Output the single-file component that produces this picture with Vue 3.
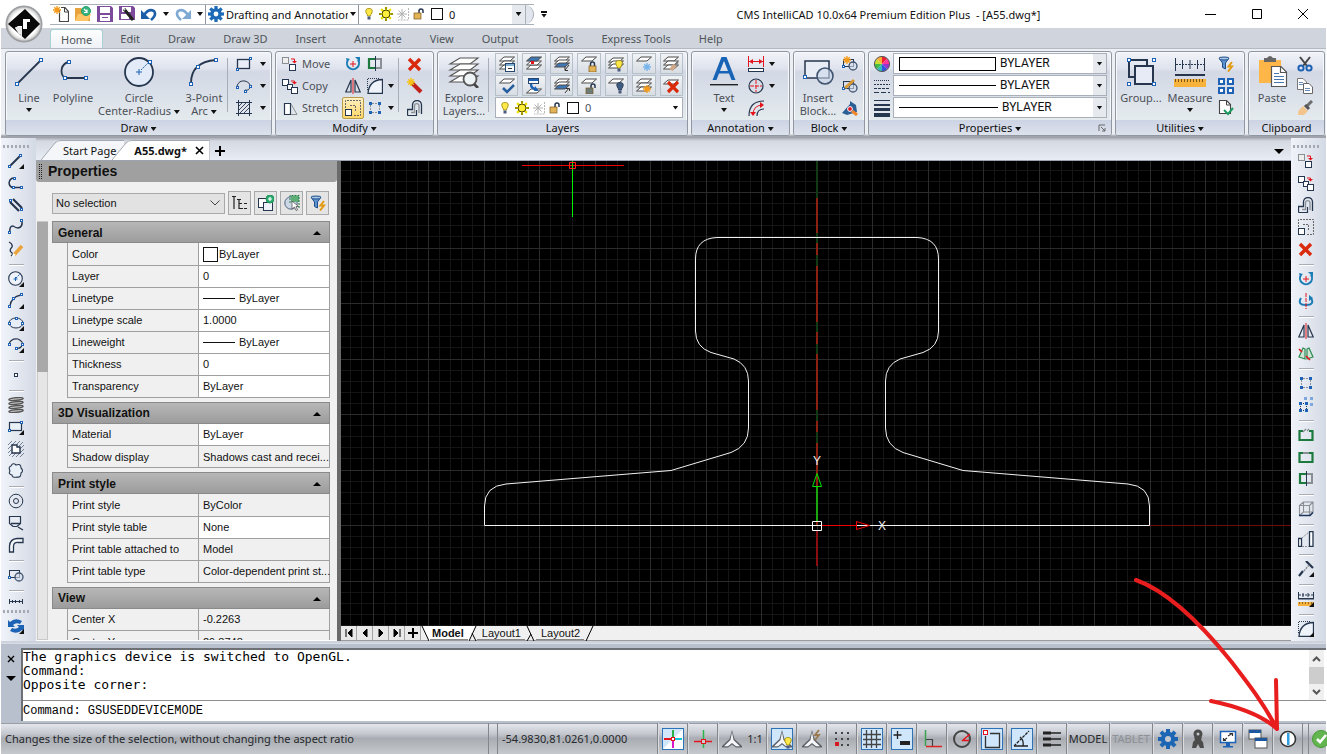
<script setup>
import { h, ref } from 'vue'

const N = '#26364e'
const B = '#1d62b5'
const R = '#e5141c'
const G = '#8a8f96'
const p = (d, s = N, w = 1, f = 'none') => `<path d="${d}" stroke="${s}" stroke-width="${w}" fill="${f}"/>`
const fill = (d, f) => `<path d="${d}" fill="${f}"/>`
const sq = (x, y, s = 3, c = B, f = '#fff') => `<rect x="${x + 0.5}" y="${y + 0.5}" width="${s}" height="${s}" fill="${f}" stroke="${c}"/>`
const box = (x, y, w, hh, f) => `<rect x="${x}" y="${y}" width="${w}" height="${hh}" fill="${f}"/>`
const circ = (x, y, r, s = N, w = 1, f = 'none') => `<circle cx="${x}" cy="${y}" r="${r}" stroke="${s}" stroke-width="${w}" fill="${f}"/>`
const dash = (d, s = N, w = 1, a = '2 1') => `<path d="${d}" stroke="${s}" stroke-width="${w}" fill="none" stroke-dasharray="${a}"/>`
const star = (x, y, r, c, w = 1.4) => {
  const k = Math.round(r * 7) / 10
  return p(`M${x - r} ${y}H${x + r}M${x} ${y - r}V${y + r}M${x - k} ${y - k}L${x + k} ${y + k}M${x + k} ${y - k}L${x - k} ${y + k}`, c, w)
}
const sheet = (y, f = '#fff', s = '#4a4a4a') => p(`M5 ${y}H15.5L11 ${y + 4}H.5Z`, s, 1, f)
const bulb = (x, y, c = '#ffe94a', s = '#9a8400') =>
  p(`M${x + 2.5} ${y + 8}Q${x + 2.5} ${y + 6.5} ${x + 1.2} ${y + 5}Q${x - 0.5} ${y + 0.5} ${x + 4} ${y + 0.5}Q${x + 8.5} ${y + 0.5} ${x + 6.8} ${y + 5}Q${x + 5.5} ${y + 6.5} ${x + 5.5} ${y + 8}Z`, s, 0.8, c) + box(x + 2.5, y + 8.5, 3, 3, '#4b5a80')
const lock = (x, y, open) =>
  p(open ? `M${x + 5} ${y + 5}V${y + 3}Q${x + 5} ${y + 1} ${x + 7} ${y + 1}Q${x + 9} ${y + 1} ${x + 9} ${y + 3}V${y + 5}` : `M${x + 1.5} ${y + 5}V${y + 3}Q${x + 1.5} ${y + 1} ${x + 3.5} ${y + 1}Q${x + 5.5} ${y + 1} ${x + 5.5} ${y + 3}V${y + 5}`, N, 1.5) +
  `<rect x="${x}" y="${y + 5}" width="7" height="6" fill="${open === 2 ? '#6f7d78' : '#e3b457'}" stroke="#7a5a20" stroke-width=".7"/>`
const tri = fill('M16 11V16H11Z', '#111')
const cross = (x, y, s, w) => p(`M${x} ${y}L${x + s} ${y + s}M${x + s} ${y}L${x} ${y + s}`, '#d92a0c', w)
const gear = (x, y, r, c, hole) => {
  let o = ''
  for (let i = 0; i < 8; i++) o += `<rect x="${x - r * 0.2}" y="${y - r}" width="${r * 0.4}" height="${r}" fill="${c}" transform="rotate(${i * 45} ${x} ${y})"/>`
  return o + `<circle cx="${x}" cy="${y}" r="${r * 0.72}" fill="${c}"/><circle cx="${x}" cy="${y}" r="${r * 0.3}" fill="${hole}"/>`
}
const compass = fill('M10 1L12.5 10L20 17V18.5H14L10 15.5L6 18.5H0V17L7.5 10Z', '#5d6167') + fill('M10 3L11.5 11L18 17.3H14L10 14L6 17.3H2L8.5 11Z', '#f4f6f8')
const funnel = p('M1 2H11L7.5 7V13L4.5 11.5V7Z', '#1f4f8c', 1, '#5c93cf') + `<ellipse cx="6" cy="2.5" rx="5" ry="1.5" fill="#a9c8e8" stroke="#1f4f8c"/>` + p('M14 6L10.5 10.5H14L10 15.5', '#e39a10', 2)
const arc3 = p('M2 13Q3 4 13 2', N, 1.3) + sq(0, 12, 2) + sq(4, 4, 2) + sq(12, 0, 2)
const U = p('M3 4A6 6 0 1 0 13 4', '#1c7cb5', 2) + fill('M10 1H15V6Z', '#1c7cb5') + fill('M1 2L5 3L2 6Z', '#1c7cb5')
const moveI = sq(0, 1, 6, G, '#eee') + sq(7, 8, 6, N) + p('M9 3H12.5V6', R) + fill('M10 5H15L12.5 7.5Z', R)
const copyI = sq(0, 1, 6, N) + sq(5, 6, 5, N) + sq(9, 9, 6, N) + p('M9 3H12.5V5', R) + fill('M10 4H15L12.5 6.5Z', R)
const offsetI = p('M.5 15.5V9.5H5.5V5A4.5 4.5 0 0 1 14.5 5V14', N, 1.3) + p('M.5 15.5H9.5V10', N, 1.2) + p('M4 12.5H7.5V5.5A2.3 2.3 0 0 1 12 5.5V13', G, 1.3)
const scaleI = dash('M.5 8V.5H15.5V15.5H8', '#666') + dash('M5 5.5H10.5V11', '#666') + sq(0, 9, 6, N)
const trimI = p('M8 3H2V12H8', '#1d7a3f', 2.2) + p('M8 3H14V12H8', G, 2) + p('M8.5 0V15', N, 1)
const mirrorI = p('M6 2V14H.8Z', N, 1.2) + p('M10 2V14H15.2Z', N, 1.2) + p('M8 0V16', R, 1)
const filletI = dash('M.5 12V.5H12', N, 1, '1 1') + p('M1 15.5Q2 2 15.5 1.5V15.5Z', N, 1.3, '#eef3fa')
const arrI = dash('M5 3.5H12M5 12.5H12M3.5 5V12M12.5 5V12', G, 1, '2 1') + box(2, 2, 3, 3, B) + box(11, 2, 3, 3, B) + box(2, 11, 3, 3, B) + box(11, 11, 3, 3, B)
const hatchI = p('M3 6L6 3M3 10L10 3M4 13L13 4M8 13L13 8', N, 0.9) + p('M2.5 0V16M13.5 0V16M0 2.5H16M0 13.5H16', N, 1)
const blockI = `<rect x="1.5" y="3.5" width="10" height="7" fill="none" stroke="${N}"/>` + circ(11, 10, 4, '#40536f', 1.3, '#d4deec99') + sq(0, 9, 2)
const measI = p('M.5 1V7M15.5 1V7M5 2V6M10 2V6', N) + dash('M1 4H15', N) + box(0, 7, 16, 1.5, N) + box(0, 11, 16, 4, '#f5b13d') + dash('M1 12H15', '#7a5412', 1.5, '1 2')

const icons = {
  app: [42, 42, `<defs><radialGradient id="ring"><stop offset=".72" stop-color="#fff"/><stop offset=".88" stop-color="#d8d8d8"/><stop offset="1" stop-color="#7f7f7f"/></radialGradient></defs><circle cx="21" cy="21" r="18" fill="url(#ring)" stroke="#9da1a6"/>` + fill('M22 6L37 21L22 36L5 21Z', '#0a0a0a') + fill('M12 25L15 23H19V31L16 31Z', '#fff') + fill('M20 16H27V19H24V26H20Z', '#fff') + fill('M12 24H19V34Z', '#e9e9e9')],
  New: [16, 16, p('M6.5 4V15.5H15.5V5.5L12 1.5H8', '#444', 1.2, '#fff') + p('M11.5 2V6H15.5', '#444') + star(4, 4, 4, '#f59b1b')],
  Open: [16, 16, fill('M0 2H6L8 4H15V15H0Z', '#e8a33c') + fill('M3 8H16L13 15H0Z', '#ffc566') + circ(11, 5, 4.5, '#25a06c', 1, '#37b37e') + p('M9 3L12 6M12 3.5V6.5H9', '#fff', 1.2)],
  Save: [16, 16, fill('M0 0H14L16 2V16H0Z', '#7d4b9b') + box(3, 1, 10, 6, '#fff') + box(3, 9, 10, 6, '#fff') + p('M5 11.5H11', '#7d4b9b', 1)],
  SaveAs: [16, 16, fill('M0 0H14L16 2V14H0Z', '#7d4b9b') + box(3, 1, 9, 5, '#fff') + box(2, 8, 8, 5, '#fff') + p('M5 3L14 14', '#222', 3) + p('M5 3L6 4', '#ddd', 2)],
  Undo: [16, 16, p('M3 9Q8 2 13 5Q16 9 10 14', '#1c5fa8', 2.6) + fill('M0 4V13H9Z', '#1c5fa8')],
  Redo: [16, 16, p('M13 9Q8 2 3 5Q0 9 6 14', '#7ea9d4', 2.6) + fill('M16 4V13H7Z', '#7ea9d4')],
  Gear: [16, 16, gear(8, 8, 8, '#1d6bb8', '#fff')],
  bulb: [14, 14, bulb(3, 1)],
  sun: [14, 14, star(7, 7, 7, '#ece000', 2.2) + circ(7, 7, 4, '#4c4500', 1, '#ffef3a') + p('M7 0V2M7 12V14M0 7H2M12 7H14', '#4c4500', 1)],
  frost: [14, 14, star(6, 7, 5, '#b0b0b0', 1) + dash('M12.5 1V13H2', '#b5b5b5')],
  lock: [14, 14, lock(1, 1, 1)],
  swatch: [14, 14, sq(1, 1, 11, '#111')],

  Line: [32, 32, p('M4 28L28 4', N, 1.8) + sq(2, 26) + sq(26, 2)],
  Polyline: [32, 32, p('M12 6A9 9 0 0 0 8 22H29', N, 1.8) + sq(10, 4) + sq(6, 20) + sq(27, 20)],
  Circle: [32, 32, circ(16, 16, 14, N, 1.8, '#e4ebf8') + p('M16 13V19M13 16H19', B) + dash('M18 14L26 6', B) + sq(25, 4)],
  Arc: [32, 32, p('M3 27Q3 6 28 4', N, 1.8) + sq(1, 26) + sq(8, 9) + sq(26, 2)],
  Rectangle: [16, 16, `<rect x="1.5" y="3.5" width="12" height="9" fill="#e8edf7" stroke="${N}" stroke-width="1.3"/>` + sq(0, 12, 2) + sq(13, 1, 2)],
  Ellipse: [16, 16, p('M1 8Q3 2 9 3Q15 5 14 9Q13 13 9 12', N, 1) + sq(0, 8, 2) + sq(13, 7, 2) + sq(8, 12, 2)],
  Hatch: [16, 16, hatchI],
  Move: [16, 16, moveI], Copy: [16, 16, copyI],
  Stretch: [16, 16, p('M2.5 3.5H8.5V14.5H2.5Z', N, 1.2, '#fff') + p('M9 4L15 14.5H9', G, 1)],
  Rotate: [16, 16, U + p('M8 5V11M5 8H11', R)],
  Trim: [16, 16, trimI], Mirror: [16, 16, mirrorI], Fillet: [16, 16, filletI], Scale: [16, 16, scaleI], Array: [16, 16, arrI],
  Erase: [16, 16, cross(2, 3, 11, 3.4)],
  Explode: [16, 16, p('M5 5L14 14', '#c2221c', 4) + p('M4 4L7 7', '#7a1a30', 2) + star(4, 4, 4, '#f6c21a', 1.6)],
  Offset: [16, 16, offsetI],
  Layers: [32, 32, [2, 8, 14, 20].map((y) => p(`M12 ${y}H30L22 ${y + 6}H2Z`, '#555', 1.1, '#fff')).join('') + circ(22, 23, 6.5, '#555', 1.8, '#eef3f6') + p('M26 28L30 32', '#444', 2.6)],
  L1: [16, 16, sheet(1) + sheet(5) + sheet(9) + `<rect x="6.5" y="7.5" width="9" height="8" fill="#fff" stroke="#26466e"/>` + box(7, 8, 8, 2, '#7fb0d8') + p('M9 12.5H13', '#333')],
  L2: [16, 16, sheet(9) + sheet(5) + sheet(1, '#3f77b2') + box(5, 5, 3, 3, R)],
  L3: [16, 16, sheet(1) + sheet(4) + sheet(7, '#3f77b2') + p('M15 9L11 14M11 11V14.5H14', '#333')],
  L4: [16, 16, sheet(1) + lock(8, 5)],
  L5: [16, 16, sheet(2) + sheet(5) + sheet(8) + bulb(7, 4)],
  L6: [16, 16, sheet(1) + star(11, 11, 4, '#79b4ea')],
  L7: [16, 16, sheet(1) + sheet(5) + sheet(9) + p('M15 6L11 10', '#7b7b7b', 2) + p('M12 9L8 14', '#cfa98a', 4)],
  M1: [16, 16, sheet(1) + p('M4 10L8 14L15 7', '#285f9f', 2.6)],
  M2: [16, 16, `<rect x="2.5" y=".5" width="10" height="5" fill="#fff" stroke="#26466e"/>` + box(3, 1, 9, 2, B) + sheet(11) + p('M5 6Q5 11 10 11', B, 2.4) + fill('M9 8L13 13H8Z', B)],
  M3: [16, 16, sheet(1) + sheet(4) + sheet(7, '#3f77b2') + p('M11 15L15 10M12 10.5H15.5V13', '#333')],
  M4: [16, 16, sheet(1) + lock(5, 5, 2)],
  M5: [16, 16, sheet(1) + bulb(8, 4, '#3f5d83', '#26364e')],
  M6: [16, 16, sheet(1) + sheet(5) + sheet(9) + star(11, 11, 4, '#f59b1b')],
  M7: [16, 16, sheet(2) + cross(5, 4, 10, 3.2)],
  Text: [32, 32, fill('M13.5 1H18.5L27.5 24H23.5L21 17.5H11L8.5 24H4.5ZM16 5L12 15H20Z', '#1763b5') + box(2, 28, 28, 1.4, '#222')],
  Dimension: [18, 16, p('M1.5 0V11M16.5 0V11M2 5.5H16', R) + fill('M2 5.5L6 3V8ZM16 5.5L12 3V8Z', R) + `<rect x="1.5" y="12.5" width="15" height="3" fill="#fff" stroke="${N}"/>`],
  Center: [18, 16, circ(9, 8, 7, N, 1.2) + dash('M9 2V14M3 8H15', R, 1, '4 1')],
  ArcDim: [18, 16, p('M2 16Q2 1 17 1', N, 1.2) + p('M10 16Q10 9 17 9', N, 1.2) + p('M6 15Q6 5 16 5', R) + fill('M13 2L17 5L13 8ZM3 12L6 16L9 12Z', R)],
  Insert: [32, 32, `<rect x="3" y="5" width="24" height="17" fill="#e7ecf5" stroke="${N}" stroke-width="1.5"/>` + circ(23, 20, 8, '#40536f', 1.6, '#cbd8ea99') + sq(1, 19)],
  Create: [16, 16, blockI + star(5, 4, 4, '#f59b1b')],
  EditBlock: [16, 16, blockI + p('M3 10L12 2', '#d99a35', 3)],
  Attribs: [16, 16, fill('M0 13L8 4V1L14 5L15 12L5 15Z', '#2c5f96') + circ(8, 9, 2.4, '#fff', 1, R) + p('M10 11L15 15', '#f0862c', 3)],
  Wheel: [18, 18, ['#e23', '#f39', '#93c', '#35d', '#3bb', '#4b4', '#cd3', '#fa3'].map((c, i) => {
    const a = (i * Math.PI) / 4 - Math.PI / 2
    const b = a + Math.PI / 4
    return fill(`M9 9L${9 + 7.5 * Math.cos(a)} ${9 + 7.5 * Math.sin(a)}A7.5 7.5 0 0 1 ${9 + 7.5 * Math.cos(b)} ${9 + 7.5 * Math.sin(b)}Z`, c)
  }).join('') + circ(9, 9, 7.6, '#555', 1)],
  Types: [18, 18, dash('M1 3.5H17', N, 1, '1 1') + dash('M1 7.5H17', N, 1.2, '2 1') + dash('M1 11.5H17', N, 1, '3 1') + dash('M1 15.5H17', N, 1.2, '5 2')],
  Weights: [18, 18, box(1, 1, 16, 1, N) + box(1, 5, 16, 2, N) + box(1, 9, 16, 3, N) + box(1, 14, 16, 4, N)],
  Group: [32, 32, `<rect x="4" y="4" width="18" height="17" fill="none" stroke="${N}" stroke-width="2"/><rect x="10" y="10" width="18" height="18" fill="#e6ebf5" stroke="${N}" stroke-width="2"/>` + sq(2, 2) + sq(27, 2) + sq(2, 26) + sq(27, 26)],
  Measure: [32, 32, p('M1.5 2V15M30.5 2V15M8.5 4V13M16 4V13M23.5 4V13', N) + dash('M2 8.5H30', N) + box(1, 18, 30, 2, N) + box(0, 23, 32, 8, '#f7b23b') + dash('M1 24.5H31', '#7a5412', 3, '1 2')],
  Filter: [16, 16, funnel],
  Select4: [16, 16, [[1, 1], [10, 1], [1, 10], [10, 10]].map(([x, y]) => `<rect x="${x}" y="${y}" width="5" height="5" fill="#fff" stroke="${B}" stroke-width="2"/>`).join('')],
  Audit: [16, 16, p('M1.5.5H8.5L12.5 4.5V13.5H1.5Z', '#444', 1.1, '#fff') + p('M8.5 1V5H12', '#444') + p('M6 10L10 14L15 8', '#1d9c62', 2)],
  Paste: [32, 32, fill('M3 4H25V27H3Z', '#ffb648') + fill('M8 6V2H11Q14-2 17 2H20V6Z', '#666') + p('M15.5 10.5H25L30.5 16V30.5H15.5Z', '#555', 1.2, '#fff') + p('M24.5 11V16.5H30', '#555', 1.2) + p('M18 17.5H23M18 20.5H28M18 23.5H28M18 26.5H28', '#4676b0', 1.2)],
  Cut: [16, 16, p('M3 1L10 10M13 1L6 10', '#444', 2) + circ(4, 12, 2.6, '#1d62b5', 2) + circ(12, 12, 2.6, '#1d62b5', 2)],
  CopyClip: [16, 16, p('M.5.5H6L9.5 4V11.5H.5Z', '#777', 1, '#fff') + p('M6.5 5.5H12L15.5 9V15.5H6.5Z', '#666', 1, '#fff') + p('M2 4.5H6M2 6.5H6M8 10.5H13M8 12.5H13', '#6a8db8')],
  Match: [16, 16, p('M15 1L10 6', '#6c6c6c', 3) + p('M8 5L12 9', '#555', 3) + fill('M6 6L11 11L7 15H1Q1 11 2 10Z', '#f3c58c')],

  tLine: [16, 16, p('M2 13L13 2', N, 2) + sq(0, 12, 2) + sq(11, 1, 2) + tri],
  tPoly: [16, 16, p('M6 3A5 5 0 0 0 4 12.5H14', N, 1.5) + sq(5, 2, 2) + sq(4, 11, 2) + sq(12, 11, 2)],
  tMulti: [16, 16, p('M2 5L11 14M5 2L14 11', N, 2.2) + sq(1, 2, 2) + sq(12, 11, 2)],
  tSpline: [16, 16, p('M2 14Q1 7 5 7Q8 9 10 9Q15 8 14 2', N, 1.5) + sq(0, 12, 2) + sq(12, 0, 2)],
  tSketch: [16, 16, p('M1 1Q5 3 4 6Q1 9 3 11Q6 13 3 15', N, 1.3) + p('M6 14L14 5', '#eba43d', 3.5) + fill('M4 16L5 12L8 14Z', '#fff')],
  tCircle: [16, 16, circ(7.5, 7.5, 6.8, N, 1.1, '#eef3fb') + p('M7.5 6V10M5.5 8H9.5', B) + dash('M8 7L12 3', B) + tri],
  tArc: [16, 16, arc3 + tri],
  tEllipse: [16, 16, `<ellipse cx="8" cy="8" rx="7" ry="5" fill="#e8eef8" stroke="${N}"/>` + sq(0, 7, 2) + sq(13, 7, 2) + sq(7, 2, 2) + tri],
  tEArc: [16, 16, p('M1 7Q3 1 10 2Q16 5 14 8Q13 12 8 11', N, 1.1) + sq(0, 6, 2) + sq(13, 6, 2) + sq(7, 10, 2) + tri],
  tPoint: [16, 16, sq(6, 6, 3, N)],
  tHelix: [16, 16, [2, 6, 10, 14].map((y) => `<ellipse cx="8" cy="${y}" rx="7" ry="1.2" fill="#ddd" stroke="#555" stroke-width="1.6" transform="rotate(-5 8 ${y})"/>`).join('')],
  tRect: [16, 16, `<rect x="1.5" y="3.5" width="12" height="8" fill="#eaf0f8" stroke="${N}" stroke-width="1.2"/>` + sq(0, 10, 2) + sq(12, 2, 2) + tri],
  tBound: [16, 16, p('M0 4L4 0M0 8L8 0M0 12L12 0M1 15L15 1M4 16L16 4M8 16L16 8M12 16L16 12', '#56637a', 0.8) + p('M4 4H9V6H12V12H4Z', N, 1.4, '#fff')],
  tCloud: [16, 16, p('M3 3Q5-1 8 2Q13 0 13 5Q16 8 13 10Q13 15 9 14Q4 15 4 12Q0 11 2 8Q0 4 3 3Z', N, 1.1, '#eaf0f8')],
  tDonut: [16, 16, circ(8, 8, 6.8, N, 1) + circ(8, 8, 2.5, N, 1)],
  tWipe: [16, 16, p('M1.5 1.5H12.5V8.5L9 11.5H5L1.5 8.5Z', N, 1.2, '#e6ebf4') + p('M3 8.5H12M10 12L15 15', N, 1.3)],
  tPline3: [16, 16, p('M1.5 15V9Q2 2 9 1.5H15V5.5H10Q6 5 5.5 9V15Z', N, 1.3, '#f4f6fa')],
  tBlock: [16, 16, blockI],
  tRuler: [16, 16, p('M1.5 5V10M14.5 5V10M4.5 6V9M7.5 6V9M11.5 6V9M1 7.5H15', N)],
  tSync: [16, 16, fill('M0 2L2 4Q7-1 14 3L12 6Q8 4 5 7L7 9H0Z', B) + fill('M16 14L14 12Q9 17 2 13L4 10Q8 12 11 9L9 7H16Z', B) + tri],
  rMove: [16, 16, moveI], rCopy: [16, 16, copyI], rOffset: [16, 16, offsetI], rScale: [16, 16, scaleI],
  rErase: [16, 16, cross(2, 3, 11, 3.4)],
  rRotate: [16, 16, U + p('M8 5V11M5 8H11', R)],
  rRot3: [16, 16, p('M3 5Q-1 12 8 12Q17 12 13 5', '#1c7cb5', 2) + fill('M11 2L15 5L11 8Z', '#1c7cb5') + dash('M8 0V16', R, 1, '4 1')],
  rMirror: [16, 16, mirrorI],
  rMir3: [16, 16, p('M5 3L7 4V14L1 12ZM11 3L9 4V14L15 12Z', '#2c8a53', 1.2, '#cfe6d6') + p('M1 4L4 7M8 11L12 15', R, 1.6)],
  rArray: [16, 16, arrI],
  rArray3: [16, 16, [[6, 0], [12, 0], [1, 5], [7, 5], [12, 6], [1, 12], [7, 12]].map(([x, y], i) => box(x, y, 3, 3, i < 2 || i === 4 ? '#7fa7dc' : B)).join('') + dash('M2.5 9V12M8.5 9V12M5 13.5H7M5 6.5H7', N, 1, '1 1')],
  rBreak: [16, 16, p('M5 4H1.5V13H14.5V4H11', '#1d7a3f', 2.2) + p('M5 5L8 2M9 4L11 2', G, 1.3)],
  rJoin: [16, 16, p('M5 4H1.5V13H14.5V4H11', '#1d7a3f', 2.2) + p('M5 4H11', G, 2)],
  rTrim: [16, 16, trimI],
  rBox: [16, 16, p('M1.5 4.5H11.5V14.5H1.5ZM5.5 1H15V11H5.5ZM1.5 4.5L5.5 1M11.5 4.5L15 1M11.5 14.5L15 11M1.5 14.5L5.5 11', G, 1.1) + p('M1 14.5H12L15 11.5', '#1c355d', 1.4)],
  rLength: [16, 16, p('M.5 7.5H3.5V15.5H.5ZM11.5.5H15V15.5H11.5Z', N, 1.3, '#fff') + dash('M4 7L11 1M4 15.5H11', G)],
  rExtend: [16, 16, p('M8 0L15 7', N, 2.2) + dash('M11 4L6 10', G, 1.6) + p('M5 10L1 15', N, 2.2) + tri],
  rMeas: [16, 16, measI + tri],
  rFillet: [16, 16, filletI + tri],

  Tree: [16, 16, p('M0 1.5H4M2 1.5V14M5 4.5H9M7 4.5V13.5H11M7 8.5H10M12 8.5H15M12 13.5H15', '#222', 1.2)],
  Pick: [16, 16, `<rect x=".5" y="3.5" width="9" height="9" fill="#fff" stroke="${N}"/><rect x="5.5" y="7.5" width="9" height="8" fill="#eef3fa" stroke="${N}"/>` + circ(12, 4, 4, '#20925b', 1, '#2cae70') + p('M12 2V6M10 4H14', '#fff', 1.2)],
  Quick: [16, 16, circ(7, 8, 6.2, '#50647e', 1, '#ccd7e6') + box(7, 1, 8, 6, '#5fae78') + dash('M6 8V.5H15V13', '#1d7a3f') + p('M8 6V14L10.5 12L12 15.5L13.5 15L12 11.5H14.5Z', '#555', 0.8, '#fff')],

  snapX: [20, 20, fill('M0 20L20 0V20Z', '#fff') + p('M10 10V19', '#d81bc8', 2) + p('M1 10H8', R, 2) + p('M12 10H19', '#13c5dc', 2) + p('M10 1V8', '#27b34a', 2) + sq(8, 8, 3, R, '#fff')],
  cursor: [20, 20, p('M10.5 1V19', '#2ab54a', 1.5) + p('M1 12.5H19', R, 1.5) + sq(8, 10, 4, R, '#c8ccd2')],
  ann: [20, 20, compass],
  annB: [20, 20, compass + bulb(12, 8)],
  annZ: [20, 20, compass + p('M17 1L13 6H17L13 11', '#9a7a4e', 1.8)],
  dots: [20, 20, [[3, 3], [9, 3], [15, 3], [3, 9], [9, 9], [15, 9], [9, 15], [15, 15]].map(([x, y]) => box(x, y, 2, 2, '#444')).join('') + sq(3, 13, 3, R, '#b22')],
  grid: [20, 20, p('M4.5 1V19M9.5 1V19M14.5 1V19M1 5.5H19M1 10.5H19M1 15.5H19', '#444', 1.3)],
  dyn: [20, 20, p('M5.5 2V10M1.5 6H9.5', '#222', 1.3) + box(8, 12, 10, 4, '#222')],
  ortho: [20, 20, p('M3.5 1V17', '#39a351', 1.5) + p('M4 17.5H20', '#d22', 1.5) + p('M4 10.5H10.5V17', '#444', 1.2)],
  polar: [20, 20, circ(10, 10, 8, '#444', 2) + p('M10 12L18 5M10 11.5H17', R, 1.5)],
  osnap: [20, 20, p('M3.5 7V18.5H17.5V4.5H8', '#333', 1.3) + sq(1, 1, 4, R)],
  otrack: [20, 20, dash('M2 17L17 2', '#222', 1.3, '3 1') + p('M2 17H16M8 8Q12 11 11 17', '#222', 1.3)],
  lwt: [20, 20, p('M1 4H9M1 10H9M1 16H9', '#222', 3) + p('M9 4H19M9 10H19M9 16H19', '#222', 1.5)],
  gearS: [20, 20, gear(10, 10, 10, '#1c66b4', '#c6cad0')],
  person: [20, 20, circ(10, 5, 3, '#4b4b4b', 3) + fill('M6 8H14Q12 11 15 13L16 19H12L10 15L8 19H4L5 13Q8 11 6 8Z', '#4b4b4b')],
  screen: [20, 20, `<rect x="2.5" y="2.5" width="15" height="11" fill="#fff" stroke="${B}" stroke-width="1.5"/>` + p('M10 7L14 4.5M11.5 4.5H14.5V7M9 9L5.5 11.5M5.5 9V11.5H8', '#333', 1.2) + box(8, 14, 4, 3, B) + box(5, 17, 10, 1.5, B)],
  wins: [20, 20, `<rect x="1" y="1" width="12" height="9" fill="#fff" stroke="#555"/><rect x="7" y="9" width="12" height="10" fill="#fff" stroke="#555"/>` + box(1, 1, 12, 3, '#1c57a0') + box(7, 9, 12, 3, '#1c57a0')],
  device: [20, 20, circ(10, 10, 7.5, '#333', 1.6, '#fff') + box(9, 4, 2.5, 12, '#2f9fe0')],
  ok: [20, 20, circ(10, 10, 8.5, '#4a9a3a', 1, '#63b54f') + p('M6 10L9 13L15 6', '#fff', 2.6)]
}

const Ico = (props) => {
  const [w, hh, body] = icons[props.n]
  return h('svg', { class: 'ico', width: w, height: hh, viewBox: `0 0 ${w} ${hh}`, 'aria-hidden': 'true', innerHTML: body })
}
Ico.props = ['n']

const tabs = ['Home', 'Edit', 'Draw', 'Draw 3D', 'Insert', 'Annotate', 'View', 'Output', 'Tools', 'Express Tools', 'Help']
const layerState = ['bulb', 'sun', 'frost', 'lock', 'swatch']
const layerTools = ['L1', 'L2', 'L3', 'L4', 'L5', 'L6', 'L7', 'M1', 'M2', 'M3', 'M4', 'M5', 'M6', 'M7']
const leftBar = ['tLine', 'tPoly', 'tMulti', 'tSpline', 'tSketch', '|', 'tCircle', 'tArc', 'tEllipse', 'tEArc', '|', 'tPoint', '|', 'tHelix', 'tRect', 'tBound', 'tCloud', '|', 'tDonut', 'tWipe', 'tPline3', '|', 'tBlock', '|']
const rightBar = ['rMove', 'rCopy', 'rOffset', 'rScale', 'rErase', '|', 'rRotate', 'rRot3', '|', 'rMirror', 'rMir3', '|', 'rArray', 'rArray3', '|', 'rBreak', 'rJoin', 'rTrim', '|', 'rBox', '|', 'rLength', '|', 'rExtend', '|', 'rMeas', '|', 'rFillet']
const sections = [
  { name: 'General', rows: [['Color', 'ByLayer', 1, 'box'], ['Layer', '0', 1], ['Linetype', 'ByLayer', 1, 'line'], ['Linetype scale', '1.0000', 1], ['Lineweight', 'ByLayer', 1, 'line'], ['Thickness', '0', 1], ['Transparency', 'ByLayer', 1]] },
  { name: '3D Visualization', rows: [['Material', 'ByLayer', 1], ['Shadow display', 'Shadows cast and recei...', 0]] },
  { name: 'Print style', rows: [['Print style', 'ByColor', 0], ['Print style table', 'None', 1], ['Print table attached to', 'Model', 0], ['Print table type', 'Color-dependent print st...', 0]] },
  { name: 'View', rows: [['Center X', '-0.2263', 0], ['Center Y', '29.8748', 0]] }
]
const status = [
  { n: 'snapX', on: 1 }, { n: 'cursor' }, { n: 'ann', t: '1:1' }, { n: 'annB', on: 1 }, { n: 'annZ' }, { n: 'dots' }, { n: 'grid', on: 1 }, { n: 'dyn', on: 1 },
  { n: 'ortho' }, { n: 'polar' }, { n: 'osnap', on: 1 }, { n: 'otrack', on: 1 }, { n: 'lwt' }, { t: 'MODEL' }, { t: 'TABLET', off: 1 }, { n: 'gearS' }, { n: 'person' }, { n: 'screen' }, { n: 'wins' }, { n: 'device' }
]

const gridPath = (major) => {
  let d = ''
  for (let i = -60; i <= 60; i++) {
    if ((i % 5 === 0) !== major) continue
    const x = Math.floor(817 + i * 11.1) + 0.5
    const y = Math.floor(525.5 + i * 11.1) + 0.5
    d += `M${x} 0V900M0 ${y}H1700`
  }
  return d
}
const half = (m) => {
  const X = (x) => (m ? 1634 - x : x)
  return `M817 237.5H${X(717)}Q${X(695.5)} 238.5 ${X(695.5)} 259V331Q${X(695.5)} 347 ${X(711)} 352.5L${X(734)} 359Q${X(748.5)} 365 ${X(748.5)} 381V428Q${X(748.5)} 446 ${X(731)} 452.5L${X(671)} 470.5L${X(506)} 484Q${X(484.5)} 486 ${X(484.5)} 506V525.5H817`
}
const command = ref('Command: GSUSEDDEVICEMODE')
</script>

<template>
  <div class="window">
    <header class="title">
      <button class="appbtn" aria-label="Application menu"><Ico n="app" /></button>
      <div class="qat">
        <div class="qicons">
          <button v-for="n in ['New', 'Open', 'Save', 'SaveAs', 'Undo']" :key="n" :aria-label="n"><Ico :n="n" /></button>
          <button class="down" aria-label="Undo list"></button>
          <button aria-label="Redo"><Ico n="Redo" /></button>
          <button class="down" aria-label="Redo list"></button>
        </div>
        <div class="workspace">
          <Ico n="Gear" />
          <select aria-label="Workspace"><option>Drafting and Annotation</option></select>
          <i class="down"></i>
        </div>
        <div class="combo qlayer">
          <Ico v-for="n in layerState" :key="n" :n="n" />
          <select aria-label="Current layer"><option>0</option></select>
          <span class="drop"><i class="down"></i></span>
        </div>
        <span class="cap"></span>
      </div>
      <button class="custom" aria-label="Customize toolbar"><i class="bar"></i><i class="down"></i></button>
      <h1>CMS IntelliCAD 10.0x64 Premium Edition Plus &nbsp;- [A55.dwg*]</h1>
      <div class="sysbtns">
        <button aria-label="Minimize"><svg width="12" height="12"><path d="M0 6.5H11" stroke="#000" /></svg></button>
        <button aria-label="Maximize"><svg width="12" height="12"><path d="M1.5 1.5H10.5V10.5H1.5Z" stroke="#000" fill="none" /></svg></button>
        <button aria-label="Close"><svg width="12" height="12"><path d="M1 1L11 11M11 1L1 11" stroke="#000" /></svg></button>
      </div>
    </header>

    <nav class="tabs">
      <button v-for="t in tabs" :key="t" :class="{ active: t === 'Home' }">{{ t }}</button>
    </nav>

    <div class="ribbon">
      <section class="panel">
        <div class="body draw">
          <button class="big"><Ico n="Line" /><span>Line</span><i class="down"></i></button>
          <button class="big"><Ico n="Polyline" /><span>Polyline</span></button>
          <button class="big"><Ico n="Circle" /><span>Circle</span><span>Center-Radius <i class="down"></i></span></button>
          <button class="big"><Ico n="Arc" /><span>3-Point</span><span>Arc <i class="down"></i></span></button>
          <i class="vsep"></i>
          <div class="col">
            <button v-for="n in ['Rectangle', 'Ellipse', 'Hatch']" :key="n" :aria-label="n"><Ico :n="n" /><i class="down"></i></button>
          </div>
        </div>
        <h2>Draw <i class="down"></i></h2>
      </section>

      <section class="panel">
        <div class="body modify">
          <div class="col named">
            <button v-for="n in ['Move', 'Copy', 'Stretch']" :key="n"><Ico :n="n" />{{ n }}</button>
          </div>
          <div class="col">
            <button aria-label="Rotate"><Ico n="Rotate" /></button>
            <button aria-label="Mirror"><Ico n="Mirror" /></button>
            <button class="hot" aria-label="Scale"><Ico n="Scale" /></button>
          </div>
          <div class="col">
            <button aria-label="Trim"><Ico n="Trim" /></button>
            <button aria-label="Fillet"><Ico n="Fillet" /><i class="down"></i></button>
            <button aria-label="Array"><Ico n="Array" /><i class="down"></i></button>
          </div>
          <i class="vsep"></i>
          <div class="col">
            <button v-for="n in ['Erase', 'Explode', 'Offset']" :key="n" :aria-label="n"><Ico :n="n" /></button>
          </div>
        </div>
        <h2>Modify <i class="down"></i></h2>
      </section>

      <section class="panel">
        <div class="body layers">
          <button class="big"><Ico n="Layers" /><span>Explore</span><span>Layers...</span></button>
          <i class="vsep"></i>
          <div class="laygrid">
            <button v-for="n in layerTools" :key="n" :aria-label="'Layer tool ' + n"><Ico :n="n" /></button>
            <div class="combo">
              <Ico v-for="n in layerState" :key="n" :n="n" />
              <select aria-label="Layer"><option>0</option></select>
              <span class="drop plain"><i class="down"></i></span>
            </div>
          </div>
        </div>
        <h2>Layers</h2>
      </section>

      <section class="panel">
        <div class="body annot">
          <button class="big"><Ico n="Text" /><span>Text</span><i class="down"></i></button>
          <div class="col">
            <button aria-label="Dimension"><Ico n="Dimension" /><i class="down"></i></button>
            <button aria-label="Center mark"><Ico n="Center" /><i class="down"></i></button>
            <button aria-label="Arc length"><Ico n="ArcDim" /></button>
          </div>
        </div>
        <h2>Annotation <i class="down"></i></h2>
      </section>

      <section class="panel">
        <div class="body block">
          <button class="big"><Ico n="Insert" /><span>Insert</span><span>Block...</span></button>
          <div class="col">
            <button v-for="n in ['Create', 'EditBlock', 'Attribs']" :key="n" :aria-label="n"><Ico :n="n" /></button>
          </div>
        </div>
        <h2>Block <i class="down"></i></h2>
      </section>

      <section class="panel">
        <div class="body props">
          <Ico n="Wheel" />
          <div class="combo"><i class="colorbox"></i><select aria-label="Color"><option>BYLAYER</option></select><span class="drop"><i class="down"></i></span></div>
          <Ico n="Types" />
          <div class="combo"><i class="rule"></i><select aria-label="Linetype"><option>BYLAYER</option></select><span class="drop"><i class="down"></i></span></div>
          <Ico n="Weights" />
          <div class="combo"><i class="rule wide"></i><select aria-label="Lineweight"><option>BYLAYER</option></select><span class="drop"><i class="down"></i></span></div>
        </div>
        <h2>Properties <i class="down"></i>
          <svg class="launch" width="8" height="8"><path d="M1 7V1H7M3 3L7 7M7 4V7H4" stroke="#666" fill="none" /></svg>
        </h2>
      </section>

      <section class="panel">
        <div class="body util">
          <button class="big"><Ico n="Group" /><span>Group...</span></button>
          <button class="big"><Ico n="Measure" /><span>Measure</span><i class="down"></i></button>
          <div class="col">
            <button v-for="n in ['Filter', 'Select4', 'Audit']" :key="n" :aria-label="n"><Ico :n="n" /></button>
          </div>
        </div>
        <h2>Utilities <i class="down"></i></h2>
      </section>

      <section class="panel">
        <div class="body clip">
          <button class="big"><Ico n="Paste" /><span>Paste</span></button>
          <div class="col">
            <button v-for="n in ['Cut', 'CopyClip', 'Match']" :key="n" :aria-label="n"><Ico :n="n" /></button>
          </div>
        </div>
        <h2>Clipboard</h2>
      </section>
    </div>

    <div class="main">
      <div class="vbar">
        <i class="grip"></i>
        <template v-for="(n, i) in leftBar" :key="i">
          <i v-if="n === '|'" class="hsep"></i>
          <button v-else :aria-label="n.slice(1)"><Ico :n="n" /></button>
        </template>
        <button class="short" aria-label="Ruler"><Ico n="tRuler" /></button>
        <i class="grip"></i>
        <button aria-label="Regenerate"><Ico n="tSync" /></button>
        <i class="hsep"></i>
      </div>

      <div class="center">
        <div class="docs">
          <button class="doc">
            <svg width="22" height="20"><path d="M0 20L14 3Q16 0 20 0H22V20Z" fill="#f4f6fa" /><path d="M0 20L14 3Q16 .5 20 .5H22" stroke="#a4a9b2" fill="none" /></svg>
            <span>Start Page</span>
          </button>
          <button class="doc on">
            <svg width="22" height="20"><path d="M0 20L14 3Q16 0 20 0H22V20Z" fill="#fff" /><path d="M0 20L14 3Q16 .5 20 .5H22" stroke="#a4a9b2" fill="none" /></svg>
            <span>A55.dwg*<svg width="9" height="9"><path d="M1 1L8 8M8 1L1 8" stroke="#000" stroke-width="1.6" /></svg></span>
          </button>
          <button class="plus" aria-label="New drawing"><svg width="10" height="10"><path d="M5 0V10M0 5H10" stroke="#000" stroke-width="2" /></svg></button>
          <button class="more" aria-label="Drawing list"><svg width="10" height="6"><path d="M0 0H10L5 5Z" /></svg></button>
        </div>

        <div class="work">
          <aside class="palette">
            <header><i></i><h2>Properties</h2></header>
            <div class="pick">
              <div class="selwrap">
                <select aria-label="Selection"><option>No selection</option></select>
                <svg width="10" height="6"><path d="M.5.5L5 5L9.5.5" stroke="#444" fill="none" /></svg>
              </div>
              <button v-for="n in ['Tree', 'Pick', 'Quick', 'Filter']" :key="n" :aria-label="n"><Ico :n="n" /></button>
            </div>
            <div class="scroller">
              <div class="track"><i></i></div>
              <div class="lists">
                <div v-for="s in sections" :key="s.name" class="sect">
                  <button class="shead">{{ s.name }}<svg width="8" height="4"><path d="M0 4L4 0L8 4Z" /></svg></button>
                  <table>
                    <tbody>
                      <tr v-for="r in s.rows" :key="r[0]">
                        <th scope="row">{{ r[0] }}</th>
                        <td :class="{ edit: r[2] }"><i v-if="r[3]" :class="r[3]"></i>{{ r[1] }}</td>
                      </tr>
                    </tbody>
                  </table>
                </div>
              </div>
            </div>
          </aside>

          <div class="view">
            <svg class="canvas" viewBox="341 161 950 465" preserveAspectRatio="xMidYMid slice" role="img" aria-label="Rail profile drawing">
              <path :d="gridPath(false)" stroke="#151515" />
              <path :d="gridPath(true)" stroke="#2b2b2b" />
              <path d="M817 525.5H1700" stroke="#6a0d0d" />
              <path d="M817 0V525" stroke="#0f3a14" stroke-width="2" />
              <path d="M817 198V233M817 243V255M817 266V322M817 332V344M817 354V410M817 421V432M817 443V525" stroke="#8c2011" stroke-width="2" />
              <path d="M817 530V566" stroke="#8c0d10" stroke-width="2" />
              <path :d="half(false)" stroke="#f2f2f2" fill="none" />
              <path :d="half(true)" stroke="#f2f2f2" fill="none" />
              <path d="M817 487V521" stroke="#1aa60d" stroke-width="2" />
              <path d="M817 473.5L812.5 486.5H821.5Z" stroke="#00e400" fill="none" />
              <path d="M821 525.5H856" stroke="#f00000" />
              <path d="M856.5 521.5V529.5L869.5 525.5Z" stroke="#f00000" fill="none" />
              <path d="M812.5 521.5H821.5V530.5H812.5Z" stroke="#fff" fill="none" />
              <text x="817" y="465" text-anchor="middle">Y</text>
              <text x="882" y="530" text-anchor="middle">X</text>
              <path d="M522 165.5H624" stroke="#f00000" />
              <path d="M572.5 161V217" stroke="#00f000" />
              <path d="M569.5 162.5H575.5V168.5H569.5Z" stroke="#ff2020" fill="none" />
            </svg>
            <div class="layouts">
              <button class="nav" aria-label="First"><svg width="8" height="8"><path d="M1 0V8M7 0L3 4L7 8Z" stroke="#000" /></svg></button>
              <button class="nav" aria-label="Previous"><svg width="8" height="8"><path d="M6 0L2 4L6 8Z" stroke="#000" /></svg></button>
              <button class="nav" aria-label="Next"><svg width="8" height="8"><path d="M2 0L6 4L2 8Z" stroke="#000" /></svg></button>
              <button class="nav" aria-label="Last"><svg width="8" height="8"><path d="M7 0V8M1 0L5 4L1 8Z" stroke="#000" /></svg></button>
              <button class="nav" aria-label="Add layout"><svg width="10" height="10"><path d="M5 0V10M0 5H10" stroke="#000" stroke-width="2" /></svg></button>
              <svg class="slant" width="9" height="15"><path d="M1 0L8 15H9V0Z" fill="#fff" /><path d="M1 0L8 15" stroke="#000" /></svg>
              <button class="lay on">Model</button>
              <svg class="slant" width="9" height="15"><path d="M0 0H8L1 15H0Z" fill="#fff" /><path d="M8 0L1 15M4 7L8 15" stroke="#000" /></svg>
              <button class="lay">Layout1</button>
              <svg class="slant" width="9" height="15"><path d="M1 0L8 15M5 8L1 15" stroke="#000" /></svg>
              <button class="lay">Layout2</button>
              <svg class="slant" width="9" height="15"><path d="M8 0L1 15" stroke="#000" /></svg>
            </div>
          </div>
        </div>
      </div>

      <div class="vbar right">
        <i class="grip"></i>
        <template v-for="(n, i) in rightBar" :key="i">
          <i v-if="n === '|'" class="hsep"></i>
          <button v-else :aria-label="n.slice(1)"><Ico :n="n" /></button>
        </template>
      </div>
    </div>

    <div class="cmd">
      <div class="cmdside">
        <button aria-label="Close command bar"><svg width="8" height="8"><path d="M1 1L7 7M7 1L1 7" stroke="#000" stroke-width="1.4" /></svg></button>
        <button aria-label="Command bar options"><svg width="10" height="6"><path d="M0 0H10L5 5Z" /></svg></button>
      </div>
      <div class="cmdbox">
        <div class="log">
          <pre>The graphics device is switched to OpenGL.
Command:
Opposite corner:</pre>
          <div class="sb">
            <svg width="9" height="6"><path d="M1 5L4.5 1.5L8 5" stroke="#555" stroke-width="2" fill="none" /></svg>
            <i></i>
            <svg width="9" height="6"><path d="M1 1L4.5 4.5L8 1" stroke="#555" stroke-width="2" fill="none" /></svg>
          </div>
        </div>
        <input v-model="command" aria-label="Command line" spellcheck="false" />
      </div>
    </div>

    <footer class="status">
      <span class="hint">Changes the size of the selection, without changing the aspect ratio</span>
      <span class="coords">-54.9830,81.0261,0.0000</span>
      <button v-for="(s, i) in status" :key="i" class="cell" :class="{ text: s.t && !s.n, both: s.t && s.n, off: s.off }" :aria-label="s.t || s.n">
        <span v-if="s.n" class="pic" :class="{ on: s.on }"><Ico :n="s.n" /></span><template v-if="s.t">{{ s.t }}</template>
      </button>
      <span class="okcell"><Ico n="ok" /></span>
    </footer>

    <svg class="callout" width="160" height="160" viewBox="1130 574 160 160" aria-hidden="true">
      <path d="M1136 580C1172 593 1205 629 1230 660C1250 686 1264 704 1277 729M1276 680L1277 729M1211 701C1240 707 1262 715 1277 729" />
    </svg>
  </div>
</template>

<style>
html, body, #app { margin: 0; height: 100%; }
body { overflow: hidden; }
</style>

<style scoped>
.window { position: relative; display: flex; flex-direction: column; height: 100vh; box-sizing: border-box; padding: 0 1px; overflow: hidden; background: #fff; color: #111; font: 11px/13px "Noto Sans", "Open Sans", sans-serif; }
.window *, .window *::before, .window *::after { box-sizing: border-box; }
button { margin: 0; padding: 0; border: 0; background: none; color: inherit; font: inherit; display: flex; align-items: center; justify-content: center; flex: none; }
select { appearance: none; min-width: 0; flex: 1; margin: 0; padding: 0; border: 0; border-radius: 0; background: none; color: inherit; font: inherit; }
h1, h2 { margin: 0; font: inherit; }
i { font-style: normal; }
svg { display: block; flex: none; }
.down { display: inline-block; width: 6px; height: 4px; background: #111; clip-path: polygon(0 0, 100% 0, 50% 100%); flex: none; }

.title { position: relative; display: flex; align-items: center; height: 28px; flex: none; background: #fff; padding-left: 49px; }
.appbtn { position: absolute; left: 2px; top: 3px; z-index: 3; }
.qat { display: flex; align-items: stretch; height: 21px; border-top: 1px solid #aab0b8; border-bottom: 1px solid #aab0b8; }
.qicons { display: flex; align-items: center; gap: 6px; padding: 0 2px 0 3px; }
.workspace { display: flex; align-items: center; width: 154px; border: 1px solid #8f959e; border-width: 0 1px; padding: 0 2px; gap: 2px; }
.combo { display: flex; align-items: center; background: #fff; border: 1px solid #a9b0ba; min-width: 0; }
.qlayer { width: 166px; border-width: 0; padding-left: 3px; gap: 3px; }
.combo select { padding-left: 2px; }
.drop { display: flex; align-items: center; justify-content: center; width: 13px; align-self: stretch; background: #e6eaef; }
.drop.plain { background: #fff; }
.cap { width: 9px; background: #e0e5ee; border: 1px solid #aab0b8; border-top: 0; border-bottom: 0; border-radius: 0 9px 9px 0; }
.custom { width: 20px; flex-direction: column; gap: 1px; }
.custom .bar { width: 6px; height: 2px; background: #111; }
h1 { flex: 1; text-align: center; white-space: nowrap; padding-left: 56px; }
.sysbtns { display: flex; gap: 34px; padding-right: 16px; width: 121px; margin-left: 38px; }

.tabs { display: flex; align-items: flex-end; height: 20px; flex: none; background: #cfd4dd; padding-left: 49px; color: #505459; }
.tabs button { height: 19px; padding: 0 14px; }
.tabs .active { padding: 0 10px; margin-right: 3px; background: linear-gradient(#fdfefe, #eef1f6); border-radius: 3px 3px 0 0; border: 1px solid #a9d0d4; border-bottom: 0; }

.ribbon { display: grid; grid-template-columns: 267fr 159fr 251fr 99fr 72fr 244fr 130fr 77fr; gap: 3px; height: 90px; flex: none; padding: 3px 1px 2px 4px; background: linear-gradient(#b4b9c2 0 1px, #eceff4 1px 86px, #a0a3ac 88px); }
.panel { display: flex; flex-direction: column; min-width: 0; border: 1px solid #9097a0; border-radius: 3px; background: linear-gradient(#f1f3f8, #dfe3ed 20%, #d3d8e5 24%, #dde3ea 60%, #eaf1f1); box-shadow: inset 0 0 0 1px #f7f9fb; overflow: hidden; color: #4c5058; }
.body { flex: 1; display: flex; min-height: 0; }
.panel h2 { position: relative; height: 15px; line-height: 15px; text-align: center; color: #111; background: linear-gradient(#ccd3e3, #dde2ec); }
.panel h2 .down, .big .down { vertical-align: 1px; }
.launch { position: absolute; right: 5px; top: 4px; }
.big { flex-direction: column; justify-content: flex-start; padding-top: 4px; white-space: nowrap; line-height: 13px; }
.big .ico { margin-bottom: 3px; }
.big > .down { margin-top: 4px; }
.vsep { width: 1px; margin: 6px 0 8px; background: #a8aeb8; flex: none; }
.col { display: grid; grid-template-rows: repeat(3, 22px); align-content: start; padding-top: 1px; justify-items: start; }
.col button { gap: 8px; }
.draw { padding-left: 3px; }
.draw .big:nth-child(1) { width: 40px; }
.draw .big:nth-child(2) { width: 48px; }
.draw .big:nth-child(3) { width: 84px; }
.draw .big:nth-child(4) { width: 46px; }
.draw .col { padding-left: 8px; }
.modify { padding-left: 6px; }
.named { width: 60px; }
.modify .named button { gap: 4px; line-height: 12px; }
.modify .col:nth-child(2) { width: 22px; justify-items: center; }
.modify .col:nth-child(3) { width: 34px; padding-left: 3px; }
.modify .col:nth-child(3) button { gap: 5px; }
.modify .col:nth-child(5) { padding-left: 8px; }
.hot { width: 22px; height: 22px; border: 1px solid #b89a4c; border-radius: 2px; background: linear-gradient(#fff0c2, #ffd768); }
.layers { padding-left: 2px; }
.layers .big { width: 48px; }
.laygrid { flex: 1; display: grid; grid-template-columns: repeat(7, 1fr); grid-template-rows: 21px 21px 21px; gap: 1px 4px; padding: 1px 4px 0 6px; min-width: 0; }
.laygrid button { border: 1px solid #b6c0c8; background: linear-gradient(#f1f4f6, #d8dde4); }
.laygrid .combo { grid-column: 1 / -1; padding-left: 2px; gap: 3px; }
.annot .big { width: 64px; }
.annot .col { margin-left: -9px; }
.annot .col button { gap: 4px; }
.block .big { width: 48px; }
.props { display: grid; grid-template-columns: 18px 1fr; grid-template-rows: 21px 21px 21px; gap: 1px 2px; padding: 1px 4px 0 4px; align-items: center; }
.props .combo { align-self: stretch; font-size: 12px; color: #111; font-family: Roboto, "Liberation Sans", sans-serif; }
.props .combo select { padding-left: 4px; }
.colorbox { width: 97px; height: 14px; margin-left: 5px; border: 1px solid #000; }
.rule { width: 97px; height: 1px; margin-left: 5px; background: #000; }
.rule.wide { width: 99px; }
.util .big:nth-child(1) { width: 50px; }
.util .big:nth-child(2) { width: 48px; }
.util .col { padding-left: 4px; }
.clip .big { width: 46px; }
.clip .col { padding-left: 2px; }

.main { flex: 1; display: flex; min-height: 0; background: #cdd2dc; padding-bottom: 2px; }
.vbar { width: 35px; flex: none; display: flex; flex-direction: column; align-items: center; padding: 6px 5px 0 0; background: linear-gradient(90deg, #f0f3f9, #d4dae5); overflow: hidden; }
.vbar button { width: 22px; height: 22px; }
.vbar .short { height: 15px; }
.grip { width: 26px; height: 3px; margin: 1px 0 2px; background: repeating-linear-gradient(90deg, #a4aab4 0 2px, transparent 2px 4px); flex: none; }
.hsep { width: 15px; height: 8px; background: linear-gradient(#a9adb5 0 1px, #fff 1px 2px) 0 4px / 100% 2px no-repeat; flex: none; }
.center { flex: 1; display: flex; flex-direction: column; min-width: 0; }
.docs { display: flex; align-items: flex-end; height: 23px; flex: none; padding: 0 7px 0 5px; background: linear-gradient(#a9acb4, #d4d9e2 3px, #e8ecf4); border-bottom: 1px solid #9ba3b0; }
.doc { height: 20px; }
.doc span { height: 20px; background: #f4f6fa; border-top: 1px solid #a4a9b2; padding-right: 8px; display: flex; align-items: center; gap: 8px; }
.doc.on { margin-left: -12px; font-weight: 700; }
.doc.on span { background: #fff; padding-right: 5px; border-right: 1px solid #c4c9d2; }
.plus { margin: 0 0 4px 5px; }
.more { margin: 0 0 5px auto; }
.work { flex: 1; display: flex; min-height: 0; }
.palette { width: 305px; flex: none; display: flex; flex-direction: column; background: #f0f0f0; border-right: 4px solid #6a6a6a; font: 11px/13px "Liberation Sans", Arial, sans-serif; color: #111; }
.palette > header { display: flex; align-items: center; gap: 5px; height: 21px; padding-left: 3px; background: #a0a0a0; border-radius: 0 0 3px 3px; flex: none; }
.palette > header i { width: 4px; height: 15px; background: conic-gradient(transparent 75%, #222 0) 0 0 / 2px 2px; }
.palette h2 { font-size: 14px; font-weight: 700; }
.pick { display: flex; align-items: center; gap: 3px; padding: 9px 8px 6px 16px; height: 39px; flex: none; }
.pick button { width: 23px; height: 24px; border: 1px solid #a9a9a9; background: #e4e4e4; }
.selwrap { flex: 1; display: flex; align-items: center; height: 21px; border: 1px solid #a9a9a9; background: #e2e2e2; padding: 0 4px 0 3px; }
.scroller { flex: 1; display: flex; min-height: 0; border-bottom: 1px solid #fff; }
.track { width: 11px; margin-left: 1px; background: #e6e6e6; border: 1px solid #c9c9c9; }
.track i { display: block; height: 150px; margin: 0 -1px; background: #a9a9a9; }
.lists { flex: 1; padding: 0 7px 0 4px; overflow: hidden; min-width: 0; }
.sect { margin-bottom: 4px; }
.shead { display: flex; justify-content: space-between; width: 100%; height: 22px; padding: 2px 8px 0 5px; background: linear-gradient(#b7b7b7, #9c9c9c); border: 1px solid #8a8a8a; font-size: 12px; font-weight: 700; }
table { width: calc(100% - 15px); margin-left: 15px; border-collapse: collapse; table-layout: fixed; }
tr { height: 22px; }
th, td { height: 22px; padding: 1px 0 0 4px; border: 1px solid #a0a0a0; border-top: 0; text-align: left; font-weight: 400; white-space: nowrap; }
.edit { background: #fff; }
td .box { display: inline-block; width: 15px; height: 15px; border: 1px solid #111; vertical-align: -4px; margin-right: 1px; }
td .line { display: inline-block; width: 32px; height: 1px; background: #111; vertical-align: 3px; margin-right: 4px; }
.view { flex: 1; display: flex; flex-direction: column; min-width: 0; }
.canvas { flex: 1; width: 100%; min-height: 0; background: #000; }
.canvas text { fill: #eee; font: 12px "Liberation Sans", Arial, sans-serif; }
.layouts { display: flex; align-items: stretch; height: 15px; flex: none; background: #f0f0f0; border-bottom: 1px solid #999; font: 11px/14px "Liberation Sans", Arial, sans-serif; }
.nav { width: 16px; border-right: 1px solid #a5a5a5; background: #e9e9e9; }
.lay { padding: 0 4px 0 5px; border-bottom: 1px solid #888; }
.lay.on { background: #fff; font-weight: 700; padding: 0 4px 0 2px; }
.slant { margin: 0 1px; }
.lay.on + .slant, .slant:has(+ .lay.on) { margin: 0; }

.cmd { display: flex; height: 80px; flex: none; background: #b9c0cd; border-top: 1px solid #d9dde4; padding-top: 4px; }
.cmdside { width: 20px; display: flex; flex-direction: column; align-items: center; gap: 13px; padding-top: 7px; }
.cmdbox { flex: 1; display: flex; flex-direction: column; background: #fff; border-top: 2px solid #6d7075; border-left: 2px solid #6d7075; min-width: 0; margin-bottom: 2px; }
.log { flex: 1; display: flex; min-height: 0; border-bottom: 1px solid #8f8f8f; }
pre { flex: 1; margin: 0; font: 13px/14px "DejaVu Sans Mono", monospace; color: #000; }
.sb { width: 15px; margin-right: 2px; display: flex; flex-direction: column; align-items: center; justify-content: space-between; padding: 6px 0 5px; background: #f0f0f0; }
.sb i { width: 15px; height: 17px; background: #cdcdcd; }
input { height: 20px; border: 0; outline: 0; padding: 0; margin: 0; background: #fff; font: 12px/16px "Liberation Mono", monospace; color: #000; }

.status { display: flex; align-items: stretch; height: 31px; flex: none; background: linear-gradient(#9a9da2 0 1px, #e3e6ec 1px, #c4c7cd 35%, #a9adb3 50%, #b4b7bc 70%, #c6c9ce); color: #26282c; }
.hint { flex: 1; display: flex; align-items: center; padding-left: 4px; white-space: nowrap; border-right: 1px solid #83868b; margin-right: 8px; min-width: 0; }
.coords { display: flex; align-items: center; width: 161px; padding-left: 4px; border: 1px solid #83868b; border-width: 0 1px; }
.cell { width: 30px; border-right: 1px solid #83868b; box-shadow: inset 1px 0 #d9dbdf; }
.both { width: 49px; gap: 4px; }
.text { width: 43px; }
.off { color: #8d9095; }
.pic { display: flex; align-items: center; justify-content: center; width: 22px; height: 22px; }
.pic.on { border: 1px solid #2e73b8; background: #cfe6fb; }
.okcell { width: 22px; display: flex; align-items: center; padding-left: 2px; margin-left: 5px; margin-right: -4px; border-left: 1px solid #83868b; }
.callout { position: absolute; right: 37px; bottom: 20px; z-index: 5; pointer-events: none; overflow: visible; }
.callout path { fill: none; stroke: #e81e1e; stroke-width: 4; stroke-linecap: round; }
</style>
